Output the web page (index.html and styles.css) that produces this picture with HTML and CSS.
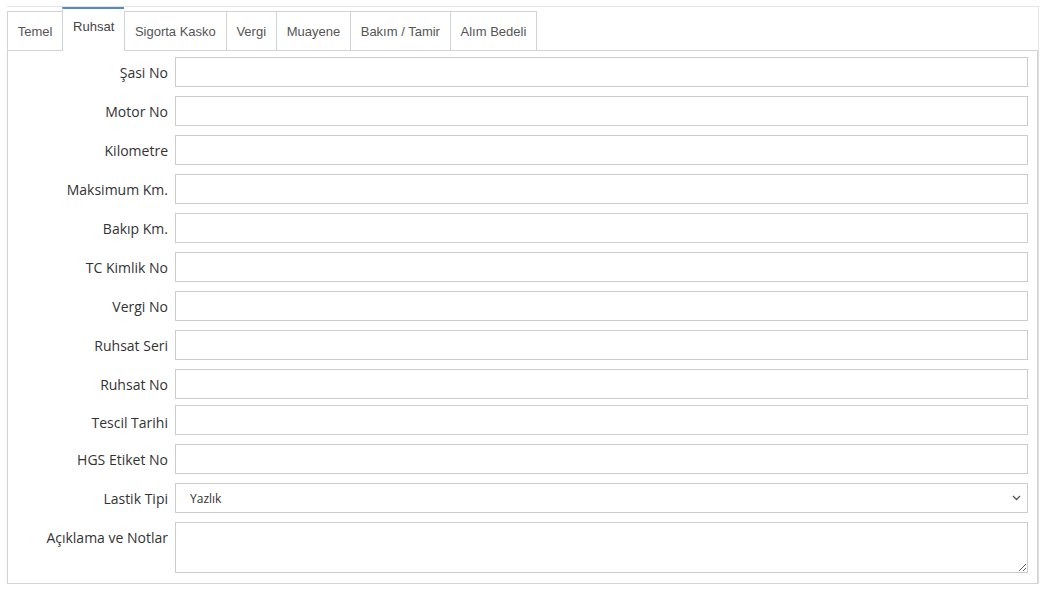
FILE: index.html
```html
<!DOCTYPE html>
<html lang="tr">
<head>
<meta charset="utf-8">
<title>Araç</title>
<link rel="stylesheet" href="styles.css">
</head>
<body>
<div class="wrap">
  <div class="tabs">
    <div class="tab">Temel</div>
    <div class="tab active">Ruhsat</div>
    <div class="tab">Sigorta Kasko</div>
    <div class="tab">Vergi</div>
    <div class="tab">Muayene</div>
    <div class="tab">Bakım / Tamir</div>
    <div class="tab last">Alım Bedeli</div>
  </div>
  <div class="panel">
    <div class="row"><label class="lbl">Şasi No</label><input class="ctl" type="text"></div>
    <div class="row"><label class="lbl">Motor No</label><input class="ctl" type="text"></div>
    <div class="row"><label class="lbl">Kilometre</label><input class="ctl" type="text"></div>
    <div class="row"><label class="lbl">Maksimum Km.</label><input class="ctl" type="text"></div>
    <div class="row"><label class="lbl">Bakıp Km.</label><input class="ctl" type="text"></div>
    <div class="row"><label class="lbl">TC Kimlik No</label><input class="ctl" type="text"></div>
    <div class="row"><label class="lbl">Vergi No</label><input class="ctl" type="text"></div>
    <div class="row"><label class="lbl">Ruhsat Seri</label><input class="ctl" type="text"></div>
    <div class="row tight"><label class="lbl">Ruhsat No</label><input class="ctl" type="text"></div>
    <div class="row"><label class="lbl low">Tescil Tarihi</label><input class="ctl" type="text"></div>
    <div class="row"><label class="lbl">HGS Etiket No</label><input class="ctl" type="text"></div>
    <div class="row"><label class="lbl">Lastik Tipi</label>
      <div class="selwrap">
        <select class="ctl sel"><option>Yazlık</option><option>Kışlık</option></select>
        <svg class="chev" width="9" height="6" viewBox="0 0 9 6"><path d="M1 1 L4.5 4.5 L8 1" fill="none" stroke="#555" stroke-width="1.3"/></svg>
      </div>
    </div>
    <div class="row last"><label class="lbl">Açıklama ve Notlar</label><textarea class="ctl area"></textarea></div>
  </div>
</div>
</body>
</html>
```

FILE: styles.css
```css
html, body {
  margin: 0;
  padding: 0;
  background: #fff;
}
.wrap {
  margin: 6px 0 0 7px;
  width: 1032px;
  border-top: 1px solid #e4e4e4;
  border-right: 1px solid #e4e4e4;
  box-sizing: border-box;
}
.tabs {
  display: flex;
  align-items: flex-end;
  height: 43px;
  font-family: "Liberation Sans", Arial, sans-serif;
  font-size: 13px;
  color: #555;
}
.tab {
  box-sizing: border-box;
  height: 39px;
  padding: 11px 9.8px 0;
  line-height: 18px;
  border-top: 1px solid #cfd4da;
  border-left: 1px solid #cfd4da;
  background: #fff;
  white-space: nowrap;
}
.tab.last {
  border-right: 1px solid #cfd4da;
}
.tab.active {
  height: 44px;
  padding-top: 9px;
  border-top: 2px solid #5a8ab6;
  margin-bottom: -1px;
  position: relative;
  z-index: 1;
  color: #444;
}
.panel {
  width: 1031px;
  box-sizing: border-box;
  border: 1px solid #d4d4d4;
  padding: 6px 9px 10px 0;
  box-shadow: 0 1px 2px rgba(0, 0, 0, 0.08);
}
.row {
  display: flex;
  gap: 7px;
  margin-bottom: 9px;
}
.row.tight {
  margin-bottom: 6px;
}
.row.last {
  margin-bottom: 0;
}
.lbl {
  width: 160px;
  flex: none;
  text-align: right;
  padding-top: 6px;
  line-height: 20px;
  font-family: "Open Sans", sans-serif;
  font-size: 14px;
  color: #333;
  white-space: nowrap;
}
.lbl.low {
  padding-top: 8px;
}
.ctl {
  flex: 1;
  min-width: 0;
  height: 30px;
  box-sizing: border-box;
  border: 1px solid #cccccc;
  border-radius: 0;
  background: #fff;
  font-family: "Open Sans", sans-serif;
  font-size: 12px;
  color: #333;
  padding: 0 10px;
  margin: 0;
  outline: none;
}
.selwrap {
  flex: 1;
  position: relative;
  display: flex;
}
.sel {
  appearance: none;
  -webkit-appearance: none;
  padding-left: 14px;
}
.chev {
  position: absolute;
  right: 7px;
  top: 12px;
  pointer-events: none;
}
.area {
  height: 51px;
  resize: vertical;
  padding: 6px 10px;
}
```
